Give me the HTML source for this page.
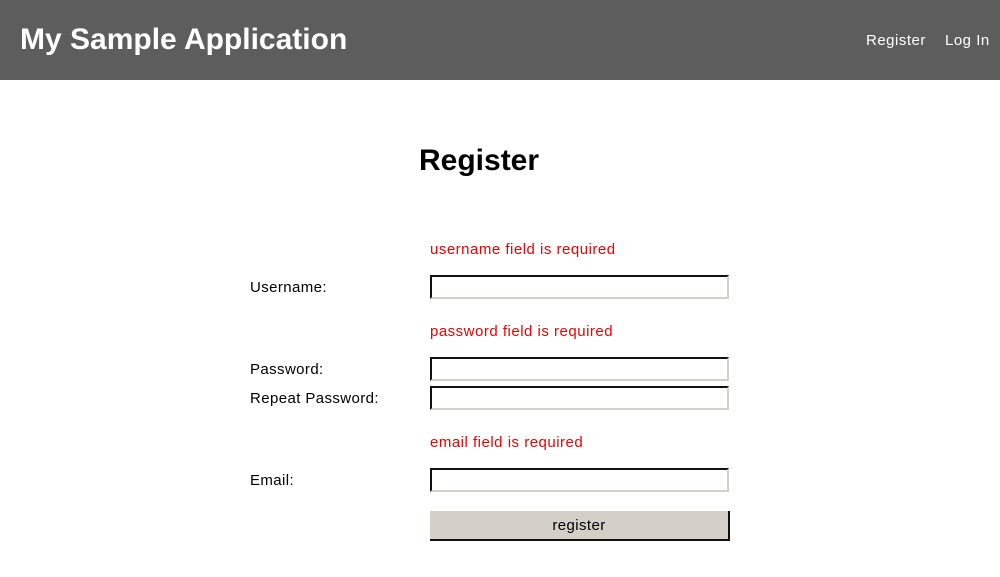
<!DOCTYPE html>
<html><head><meta charset="utf-8"><style>
body{margin:0;width:1000px;height:577px;background:#fff;font-family:"Liberation Sans",sans-serif;position:relative;overflow:hidden}
.hdr{position:absolute;left:0;top:0;width:1000px;height:80px;background:#5d5d5d}
.t{position:absolute;white-space:nowrap}
.inp{position:absolute;left:430px;width:295px;height:20px;background:#fff;border-top:2px solid #111;border-left:2px solid #111;border-right:2px solid #d4d0c8;border-bottom:2px solid #d4d0c8}
.err{color:#e00;font-size:15px;letter-spacing:0.5px}
.lbl{font-size:15px;color:#000;letter-spacing:0.4px}
</style></head><body>
<div class="hdr"></div>
<div class="t" style="left:20px;top:23px;font-size:30px;font-weight:bold;color:#fff">My Sample Application</div>
<div class="t" style="left:866px;top:32px;font-size:15px;color:#fff;letter-spacing:0.5px">Register</div>
<div class="t" style="left:945px;top:32px;font-size:15px;color:#fff;letter-spacing:0.5px">Log In</div>
<div class="t" style="left:419px;top:144px;font-size:30px;font-weight:bold">Register</div>
<div class="t err" style="left:430px;top:241px">username field is required</div>
<div class="t lbl" style="left:250px;top:279px">Username:</div>
<div class="inp" style="top:275px"></div>
<div class="t err" style="left:430px;top:323px">password field is required</div>
<div class="t lbl" style="left:250px;top:361px">Password:</div>
<div class="inp" style="top:357px"></div>
<div class="t lbl" style="left:250px;top:390px">Repeat Password:</div>
<div class="inp" style="top:386px"></div>
<div class="t err" style="left:430px;top:434px">email field is required</div>
<div class="t lbl" style="left:250px;top:472px">Email:</div>
<div class="inp" style="top:468px"></div>
<div style="position:absolute;left:430px;top:511px;width:298px;height:28px;background:#d4d0c8;border-right:2px solid #111;border-bottom:2px solid #111;text-align:center;line-height:30px;font-size:15px;letter-spacing:0.4px">register</div>
</body></html>
